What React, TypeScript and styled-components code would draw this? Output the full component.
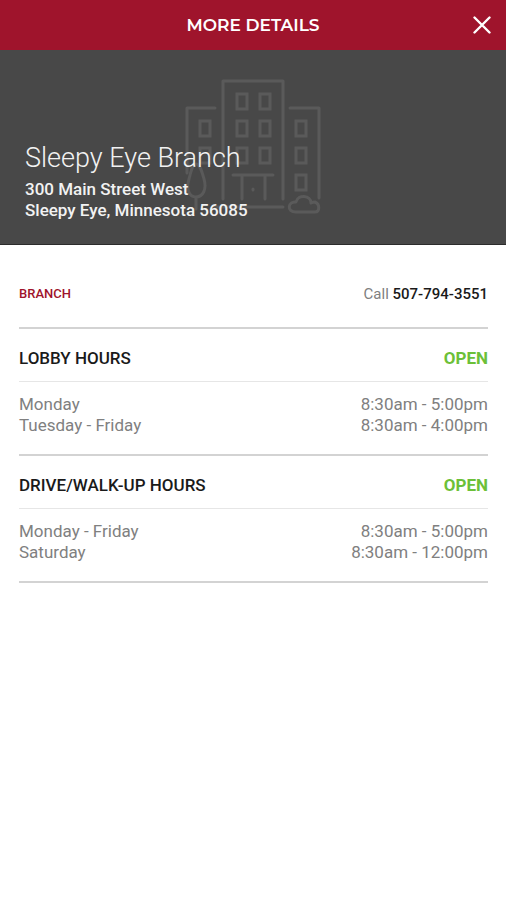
import React from "react";
import styled, { createGlobalStyle } from "styled-components";

const GlobalStyle = createGlobalStyle`
  *, *::before, *::after { box-sizing: border-box; }
  body { margin: 0; background: #fff; font-family: Roboto, "Liberation Sans", sans-serif; }
`;

const Screen = styled.div`
  display: flex;
  flex-direction: column;
  min-height: 100vh;
  background: #fff;
`;

const TopBar = styled.header`
  display: grid;
  grid-template-columns: 48px 1fr 48px;
  align-items: center;
  height: 50px;
  background: #9f142c;
  color: #fff;
`;

const Title = styled.h1`
  grid-column: 2;
  margin: 0;
  text-align: center;
  font-family: Montserrat, "Open Sans", sans-serif;
  font-size: 17px;
  line-height: 24px;
  font-weight: 600;
`;

const CloseButton = styled.button`
  display: flex;
  align-items: center;
  justify-content: center;
  height: 48px;
  padding: 0;
  border: 0;
  background: none;
  color: inherit;
  cursor: pointer;
`;

const Hero = styled.section`
  position: relative;
  display: flex;
  flex-direction: column;
  gap: 3px;
  padding: 90px 25px 23px;
  background: #484848;
  border-bottom: 1px solid #2c2c2c;
  color: #f2f2f2;
`;

const HeroArt = styled.div`
  position: absolute;
  inset: 27px 0 auto;
  display: flex;
  justify-content: center;
  color: #5a5a5a;
`;

const BranchName = styled.h2`
  position: relative;
  margin: 0;
  font-size: 27px;
  line-height: 36px;
  font-weight: 300;
`;

const Address = styled.address`
  position: relative;
  font-size: 17px;
  line-height: 21px;
  font-style: normal;
  font-weight: 500;
`;

const Content = styled.main`
  padding: 0 18px 0 19px;
`;

const ContactRow = styled.div`
  display: flex;
  align-items: center;
  justify-content: space-between;
  height: 84px;
  padding-top: 16px;
  line-height: 20px;
  border-bottom: 2px solid #d3d3d3;
`;

const Kind = styled.span`
  color: #9f142c;
  font-size: 13px;
  font-weight: 500;
`;

const PhoneLink = styled.a`
  color: #808080;
  font-size: 15px;
  text-decoration: none;
`;

const PhoneNumber = styled.strong`
  color: #1a1a1a;
  font-weight: 500;
`;

const HoursSection = styled.section`
  border-bottom: 2px solid #d3d3d3;
`;

const HoursHeader = styled.div`
  display: flex;
  align-items: center;
  justify-content: space-between;
  height: 53px;
  padding-top: 5px;
  border-bottom: 1px solid #e6e6e6;
  font-size: 17px;
  line-height: 24px;
`;

const HoursTitle = styled.h3`
  margin: 0;
  color: #1a1a1a;
  font-size: inherit;
  font-weight: 500;
`;

const Status = styled.span`
  color: #6cc038;
  font-weight: 700;
`;

const HoursTable = styled.table`
  width: 100%;
  margin: 12px 0 18px;
  border-collapse: collapse;
  color: #808080;
  font-size: 17px;
  line-height: 21px;
`;

const Day = styled.th`
  padding: 0;
  text-align: left;
  font-weight: 400;
`;

const Time = styled.td`
  padding: 0;
  text-align: right;
`;

const windows = [
  [52, 17], [75, 17], [52, 44], [75, 44], [52, 71], [75, 71],
  [15, 44], [15, 71], [111, 44], [111, 71], [111, 98],
];

function BuildingArt() {
  return (
    <svg width="136" height="138" viewBox="0 0 136 138" fill="none" stroke="currentColor" strokeWidth="3" strokeLinecap="round" strokeLinejoin="round" aria-hidden="true">
      <path d="M38 122V4h60v118M30 31H2v65M105 31h29v90M30 130h68" />
      {windows.map(([x, y]) => (
        <rect key={`${x}-${y}`} x={x} y={y} width="10" height="15" strokeLinejoin="miter" />
      ))}
      <path d="M48 98h40M57 98v24M80 98v24M68 112v1" />
      <path d="M11 87C7 87 6 95 4 102C1 112 4 120 11 120S22 112 19 102C17 95 15 87 11 87ZM11 120v12" />
      <path d="M111 135h19c5 0 5-8 0-10-2 0-4 1-4 1 0-8-13-9-15-1-8-1-10 10 0 10Z" />
    </svg>
  );
}

const sections = [
  { title: "LOBBY HOURS", rows: [["Monday", "8:30am - 5:00pm"], ["Tuesday - Friday", "8:30am - 4:00pm"]] },
  { title: "DRIVE/WALK-UP HOURS", rows: [["Monday - Friday", "8:30am - 5:00pm"], ["Saturday", "8:30am - 12:00pm"]] },
];

export default function App() {
  return (
    <Screen>
      <GlobalStyle />
      <TopBar>
        <Title>MORE DETAILS</Title>
        <CloseButton type="button" aria-label="Close">
          <svg width="18" height="18" viewBox="0 0 18 18" fill="none" stroke="currentColor" strokeWidth="2.4" strokeLinecap="round" aria-hidden="true">
            <path d="M1.5 1.5l15 15M16.5 1.5l-15 15" />
          </svg>
        </CloseButton>
      </TopBar>
      <Hero>
        <HeroArt><BuildingArt /></HeroArt>
        <BranchName>Sleepy Eye Branch</BranchName>
        <Address>300 Main Street West<br />Sleepy Eye, Minnesota 56085</Address>
      </Hero>
      <Content>
        <ContactRow>
          <Kind>BRANCH</Kind>
          <PhoneLink href="tel:507-794-3551">Call <PhoneNumber>507-794-3551</PhoneNumber></PhoneLink>
        </ContactRow>
        {sections.map((s) => (
          <HoursSection key={s.title}>
            <HoursHeader>
              <HoursTitle>{s.title}</HoursTitle>
              <Status>OPEN</Status>
            </HoursHeader>
            <HoursTable aria-label={s.title}>
              <tbody>
                {s.rows.map(([day, time]) => (
                  <tr key={day}>
                    <Day scope="row">{day}</Day>
                    <Time>{time}</Time>
                  </tr>
                ))}
              </tbody>
            </HoursTable>
          </HoursSection>
        ))}
      </Content>
    </Screen>
  );
}
